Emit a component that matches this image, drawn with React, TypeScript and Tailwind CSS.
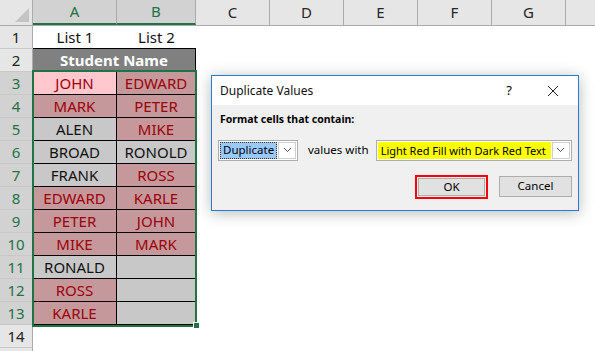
import React from "react";

type Cell = { t: string; dup?: boolean; active?: boolean };

const data: [Cell, Cell][] = [
  [{ t: "JOHN", dup: true, active: true }, { t: "EDWARD", dup: true }],
  [{ t: "MARK", dup: true }, { t: "PETER", dup: true }],
  [{ t: "ALEN" }, { t: "MIKE", dup: true }],
  [{ t: "BROAD" }, { t: "RONOLD" }],
  [{ t: "FRANK" }, { t: "ROSS", dup: true }],
  [{ t: "EDWARD", dup: true }, { t: "KARLE", dup: true }],
  [{ t: "PETER", dup: true }, { t: "JOHN", dup: true }],
  [{ t: "MIKE", dup: true }, { t: "MARK", dup: true }],
  [{ t: "RONALD" }, { t: "" }],
  [{ t: "ROSS", dup: true }, { t: "" }],
  [{ t: "KARLE", dup: true }, { t: "" }],
];

const otherCols = ["C", "D", "E", "F", "G"];

function DataCell({ c, w }: { c: Cell; w: string }) {
  const cls = c.active
    ? "bg-[#ffc7ce] text-[#9c0006]"
    : c.dup
    ? "bg-[#c5989c] text-[#9c0006]"
    : "bg-[#c8c8c8] text-[#111]";
  return (
    <div className={`${w} h-full flex items-center justify-center border-r border-b border-black ${cls}`}>
      {c.t}
    </div>
  );
}

function RowHead({ n, sel }: { n?: number; sel?: boolean }) {
  return (
    <div
      className={`w-[33px] h-full flex items-center justify-center border-r border-b border-r-[#ababab] border-b-[#c8c8c8] ${
        sel ? "bg-[#d2d2d2] text-[#217346]" : "bg-[#e6e6e6] text-[#222]"
      }`}
    >
      {n}
    </div>
  );
}

function Chevron() {
  return (
    <svg width="9" height="6" viewBox="0 0 9 6">
      <path d="M1 1 L4.5 4.5 L8 1" fill="none" stroke="#555" strokeWidth="1" />
    </svg>
  );
}

export default function App() {
  return (
    <div className="relative w-[595px] h-[351px] overflow-hidden bg-white text-[15px] font-['Noto_Sans',sans-serif] leading-none">
      {/* column header */}
      <div className="flex h-[26px] bg-[#e6e6e6] border-b border-[#ababab] text-[#262626]">
        <div className="w-[33px] h-full border-r border-[#ababab] flex items-end justify-end p-[3px]">
          <div className="w-0 h-0 border-l-[14px] border-l-transparent border-b-[14px] border-b-[#c4c4c4]" />
        </div>
        <div className="w-[84px] h-full flex items-center justify-center bg-[#d2d2d2] text-[#217346] border-r border-[#ababab] border-b-2 border-b-[#217346]">
          A
        </div>
        <div className="w-[79px] h-full flex items-center justify-center bg-[#d2d2d2] text-[#217346] border-r border-[#ababab] border-b-2 border-b-[#217346]">
          B
        </div>
        {otherCols.map((c) => (
          <div key={c} className="w-[74px] h-full flex items-center justify-center border-r border-[#ababab]">
            {c}
          </div>
        ))}
        <div className="flex-1" />
      </div>

      {/* row 1 */}
      <div className="flex h-[23px]">
        <RowHead n={1} />
        <div className="w-[84px] flex items-center justify-center border-b border-black text-[#111]">List 1</div>
        <div className="w-[79px] flex items-center justify-center border-b border-black text-[#111]">List 2</div>
      </div>

      {/* row 2 */}
      <div className="flex h-[23px]">
        <RowHead n={2} />
        <div className="w-[163px] flex items-center justify-center bg-[#808080] text-white font-bold border-r border-b border-black">
          Student Name
        </div>
      </div>

      {data.map((r, i) => (
        <div key={i} className="flex h-[23px]">
          <RowHead n={i + 3} sel />
          <DataCell c={r[0]} w="w-[84px]" />
          <DataCell c={r[1]} w="w-[79px]" />
        </div>
      ))}

      <div className="flex h-[23px]">
        <RowHead n={14} />
      </div>
      <div className="flex h-[23px]">
        <RowHead />
      </div>

      {/* selection outline */}
      <div className="absolute left-[32px] top-[70px] w-[165px] h-[257px] border-2 border-[#217346]" />
      <div className="absolute left-[193px] top-[322px] w-[7px] h-[7px] bg-[#217346] border border-white" />

      {/* dialog */}
      <div className="absolute left-[211px] top-[75px] w-[368px] h-[136px] border border-[#2b7bd0] bg-[#f0f0f0] shadow-[0_2px_14px_rgba(0,0,0,0.28)] font-['Noto_Sans',sans-serif] text-[11.5px] text-black flex flex-col">
        <div className="h-[29px] bg-white flex items-center pl-[8px] pr-[19px]">
          <span className="text-[12px] text-[#111] flex-1">Duplicate Values</span>
          <span className="text-[13px] mr-[35px]">?</span>
          <svg width="12" height="12" viewBox="0 0 12 12">
            <path d="M1 1 L11 11 M11 1 L1 11" stroke="#222" strokeWidth="1" />
          </svg>
        </div>
        <div className="pl-[8px] pt-[9px] font-bold text-[10.5px]">Format cells that contain:</div>
        <div className="flex items-center pl-[6px] mt-[15px] h-[21px]">
          <div className="w-[80px] h-full border border-[#adadad] bg-white flex p-[1px]">
            <div className="flex-1 bg-[#99c9ff] border border-dotted border-[#333] flex items-center pl-[2px]">Duplicate</div>
            <div className="w-[18px] ml-[1px] border border-[#cfcfcf] flex items-center justify-center">
              <Chevron />
            </div>
          </div>
          <span className="ml-[10px]">values with</span>
          <div className="ml-[7px] w-[196px] h-full border border-[#adadad] bg-white flex p-[1px]">
            <div className="flex-1 bg-[#ffff00] flex items-center pl-[3px] text-[11px]">Light Red Fill with Dark Red Text</div>
            <div className="w-[18px] ml-[1px] border border-[#cfcfcf] flex items-center justify-center">
              <Chevron />
            </div>
          </div>
        </div>
        <div className="flex justify-end pr-[6px] mt-[15px] gap-[11px]">
          <div className="w-[73px] h-[24px] border-2 border-[#ff0000] p-[1px] mt-[-1px]">
            <div className="w-full h-full bg-[#e1e1e1] border border-[#adadad] flex items-center justify-center">OK</div>
          </div>
          <div className="w-[73px] h-[21px] bg-[#e1e1e1] border border-[#adadad] flex items-center justify-center">Cancel</div>
        </div>
      </div>
    </div>
  );
}
